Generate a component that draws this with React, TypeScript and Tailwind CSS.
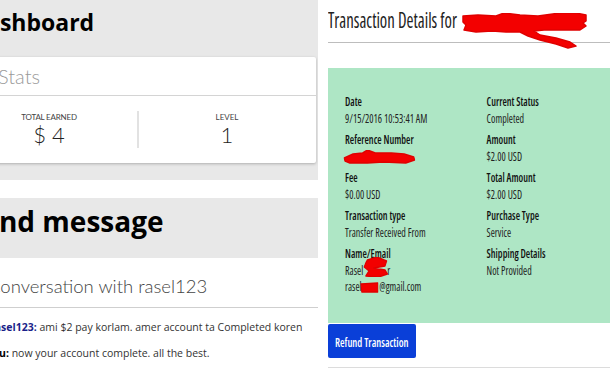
import React from "react"

const sans = "font-['Open_Sans',_'Liberation_Sans',_sans-serif]"
const light = "font-['Lato',_'Open_Sans',_sans-serif]"

// red marker scribbles that hide private data in the screenshot
function Scribble({ className, w, h, d }: { className?: string; w: number; h: number; d: string }) {
  return (
    <svg className={className} width={w} height={h} viewBox={`0 0 ${w} ${h}`}>
      <path d={d} fill="#f30000" stroke="#e00000" strokeWidth="1.5" strokeLinejoin="round" />
    </svg>
  )
}

function Field({ label, children }: { label: string; children: React.ReactNode }) {
  return (
    <div className="leading-[16.5px]">
      <div className="font-semibold text-[#111]">{label}</div>
      <div className="text-[#222]">{children}</div>
    </div>
  )
}

export default function App() {
  return (
    <div className={`flex w-[610px] h-[380px] overflow-hidden bg-white ${sans}`}>
      {/* left: dashboard */}
      <div className="w-[318px] shrink-0 overflow-hidden">
        <div className="bg-[#e8e8e8] h-[180px] pt-[5px]">
          <h1 className="text-[23px] font-bold text-black leading-[34px] -ml-[31px] whitespace-nowrap">Dashboard</h1>
          <div className="mt-[18px] -ml-[40px] w-[356px] bg-white shadow-[0_1px_3px_rgba(0,0,0,0.25)] rounded-[2px]">
            <div className={`h-[39px] flex items-center pl-[38px] border-b border-[#d4d4d4] text-[20px] font-light text-[#9a9a9a] ${light}`}>
              Stats
            </div>
            <div className={`flex items-center h-[67px] pl-[1px] ${light}`}>
              <div className="w-[176px] flex flex-col items-center">
                <div className="text-[8px] text-[#444] tracking-tight leading-[9px]">TOTAL EARNED</div>
                <div className="mt-[2px] text-[22px] font-light text-[#222] leading-[22px]">$ 4</div>
              </div>
              <div className="w-[2px] h-[37px] bg-[#e2e2e2]" />
              <div className="w-[176px] flex flex-col items-center">
                <div className="text-[8px] text-[#444] leading-[9px]">LEVEL</div>
                <div className="mt-[2px] text-[22px] font-light text-[#222] leading-[22px]">1</div>
              </div>
            </div>
          </div>
        </div>
        <div className="mt-[18px] h-[60px] bg-[#e8e8e8] pt-[4px]">
          <h2 className="text-[28px] font-bold text-black leading-[38px] -ml-[33px] whitespace-nowrap">Send message</h2>
        </div>
        <div className={`mt-[15px] text-[18.5px] font-light text-[#444] leading-[26px] -ml-[12px] whitespace-nowrap ${light}`}>
          Conversation with rasel123
        </div>
        <div className="mt-[8px] border-t border-[#cfcfcf]" />
        <div className="text-[10.5px] leading-[15px] text-[#333] whitespace-nowrap">
          <p className="mt-[12px] -ml-[10px]">
            <b className="text-[#1c1f8a]">rasel123:</b> ami $2 pay korlam. amer account ta Completed koren
          </p>
          <p className="mt-[11px] -ml-[14px]">
            <b className="text-black">You:</b> now your account complete. all the best.
          </p>
        </div>
      </div>

      {/* right: transaction details */}
      <div className="flex-1 ml-[10px] font-stretch-condensed">
        <div className="relative h-[43px] border-b border-[#bdbdbd] flex items-end pb-[8px]">
          <span className="inline-block origin-left scale-x-[0.8] text-[21px] text-[#222] leading-[28px] whitespace-nowrap">
            Transaction Details for
          </span>
          <Scribble
            className="absolute left-[134px] top-[13px]"
            w={125}
            h={36}
            d="M1 3 L16 2 L34 3 L42 0 L58 2 L76 3 L98 0 L114 0 L124 2 L124 8 L121 10 L124 13 L118 17 L96 17 L82 17 L72 18 L78 22 L94 25 L108 29 L114 33 L106 35 L94 31 L78 27 L66 23 L58 19 L44 19 L30 18 L14 19 L2 17 L4 12 L1 9 Z"
          />
        </div>
        <div className="mt-[25px] h-[255px] bg-[#aee6c5] pt-[26px] pl-[17px] text-[12.5px]">
          <div className="origin-left scale-x-[0.8] grid grid-cols-[177px_1fr] gap-y-[5px] w-[330px]">
            <Field label="Date">9/15/2016 10:53:41 AM</Field>
            <Field label="Current Status">Completed</Field>
            <Field label="Reference Number">
              <span className="relative block h-[16.5px]">
                <Scribble
                  className="absolute -left-[2px] top-[1px]"
                  w={90}
                  h={14}
                  d="M1 8 L12 4 L24 3 L30 0 L40 3 L60 3 L76 4 L88 7 L89 10 L78 13 L50 12 L30 13 L8 13 L2 11 Z"
                />
              </span>
            </Field>
            <Field label="Amount">$2.00 USD</Field>
            <Field label="Fee">$0.00 USD</Field>
            <Field label="Total Amount">$2.00 USD</Field>
            <Field label="Transaction type">Transfer Received From</Field>
            <Field label="Purchase Type">Service</Field>
            <Field label="Name/Email">
              <span className="relative block">
                Rasel
                <span className="inline-block w-[30px]" />r
                <Scribble
                  className="absolute left-[22px] -top-[6px]"
                  w={32}
                  h={20}
                  d="M6 3 L18 0 L30 4 L28 9 L14 11 L28 13 L31 17 L20 20 L4 19 L8 14 L2 10 L4 6 Z"
                />
              </span>
              <span className="relative block">
                rasel<span className="inline-block w-[22px]" />@gmail.com
                <Scribble
                  className="absolute left-[19px] top-[3px]"
                  w={23}
                  h={11}
                  d="M1 2 L22 1 L22 10 L2 10 Z"
                />
              </span>
            </Field>
            <Field label="Shipping Details">Not Provided</Field>
          </div>
        </div>
        <button className="mt-[1px] w-[88px] h-[34px] bg-[#0a3fd8] rounded-[2px] text-left pl-[7px]">
          <span className="inline-block origin-left scale-x-[0.8] text-white text-[13px] font-semibold whitespace-nowrap">
            Refund Transaction
          </span>
        </button>
        <div className="mt-[9px] border-t border-[#dcdcdc]" />
      </div>
    </div>
  )
}
